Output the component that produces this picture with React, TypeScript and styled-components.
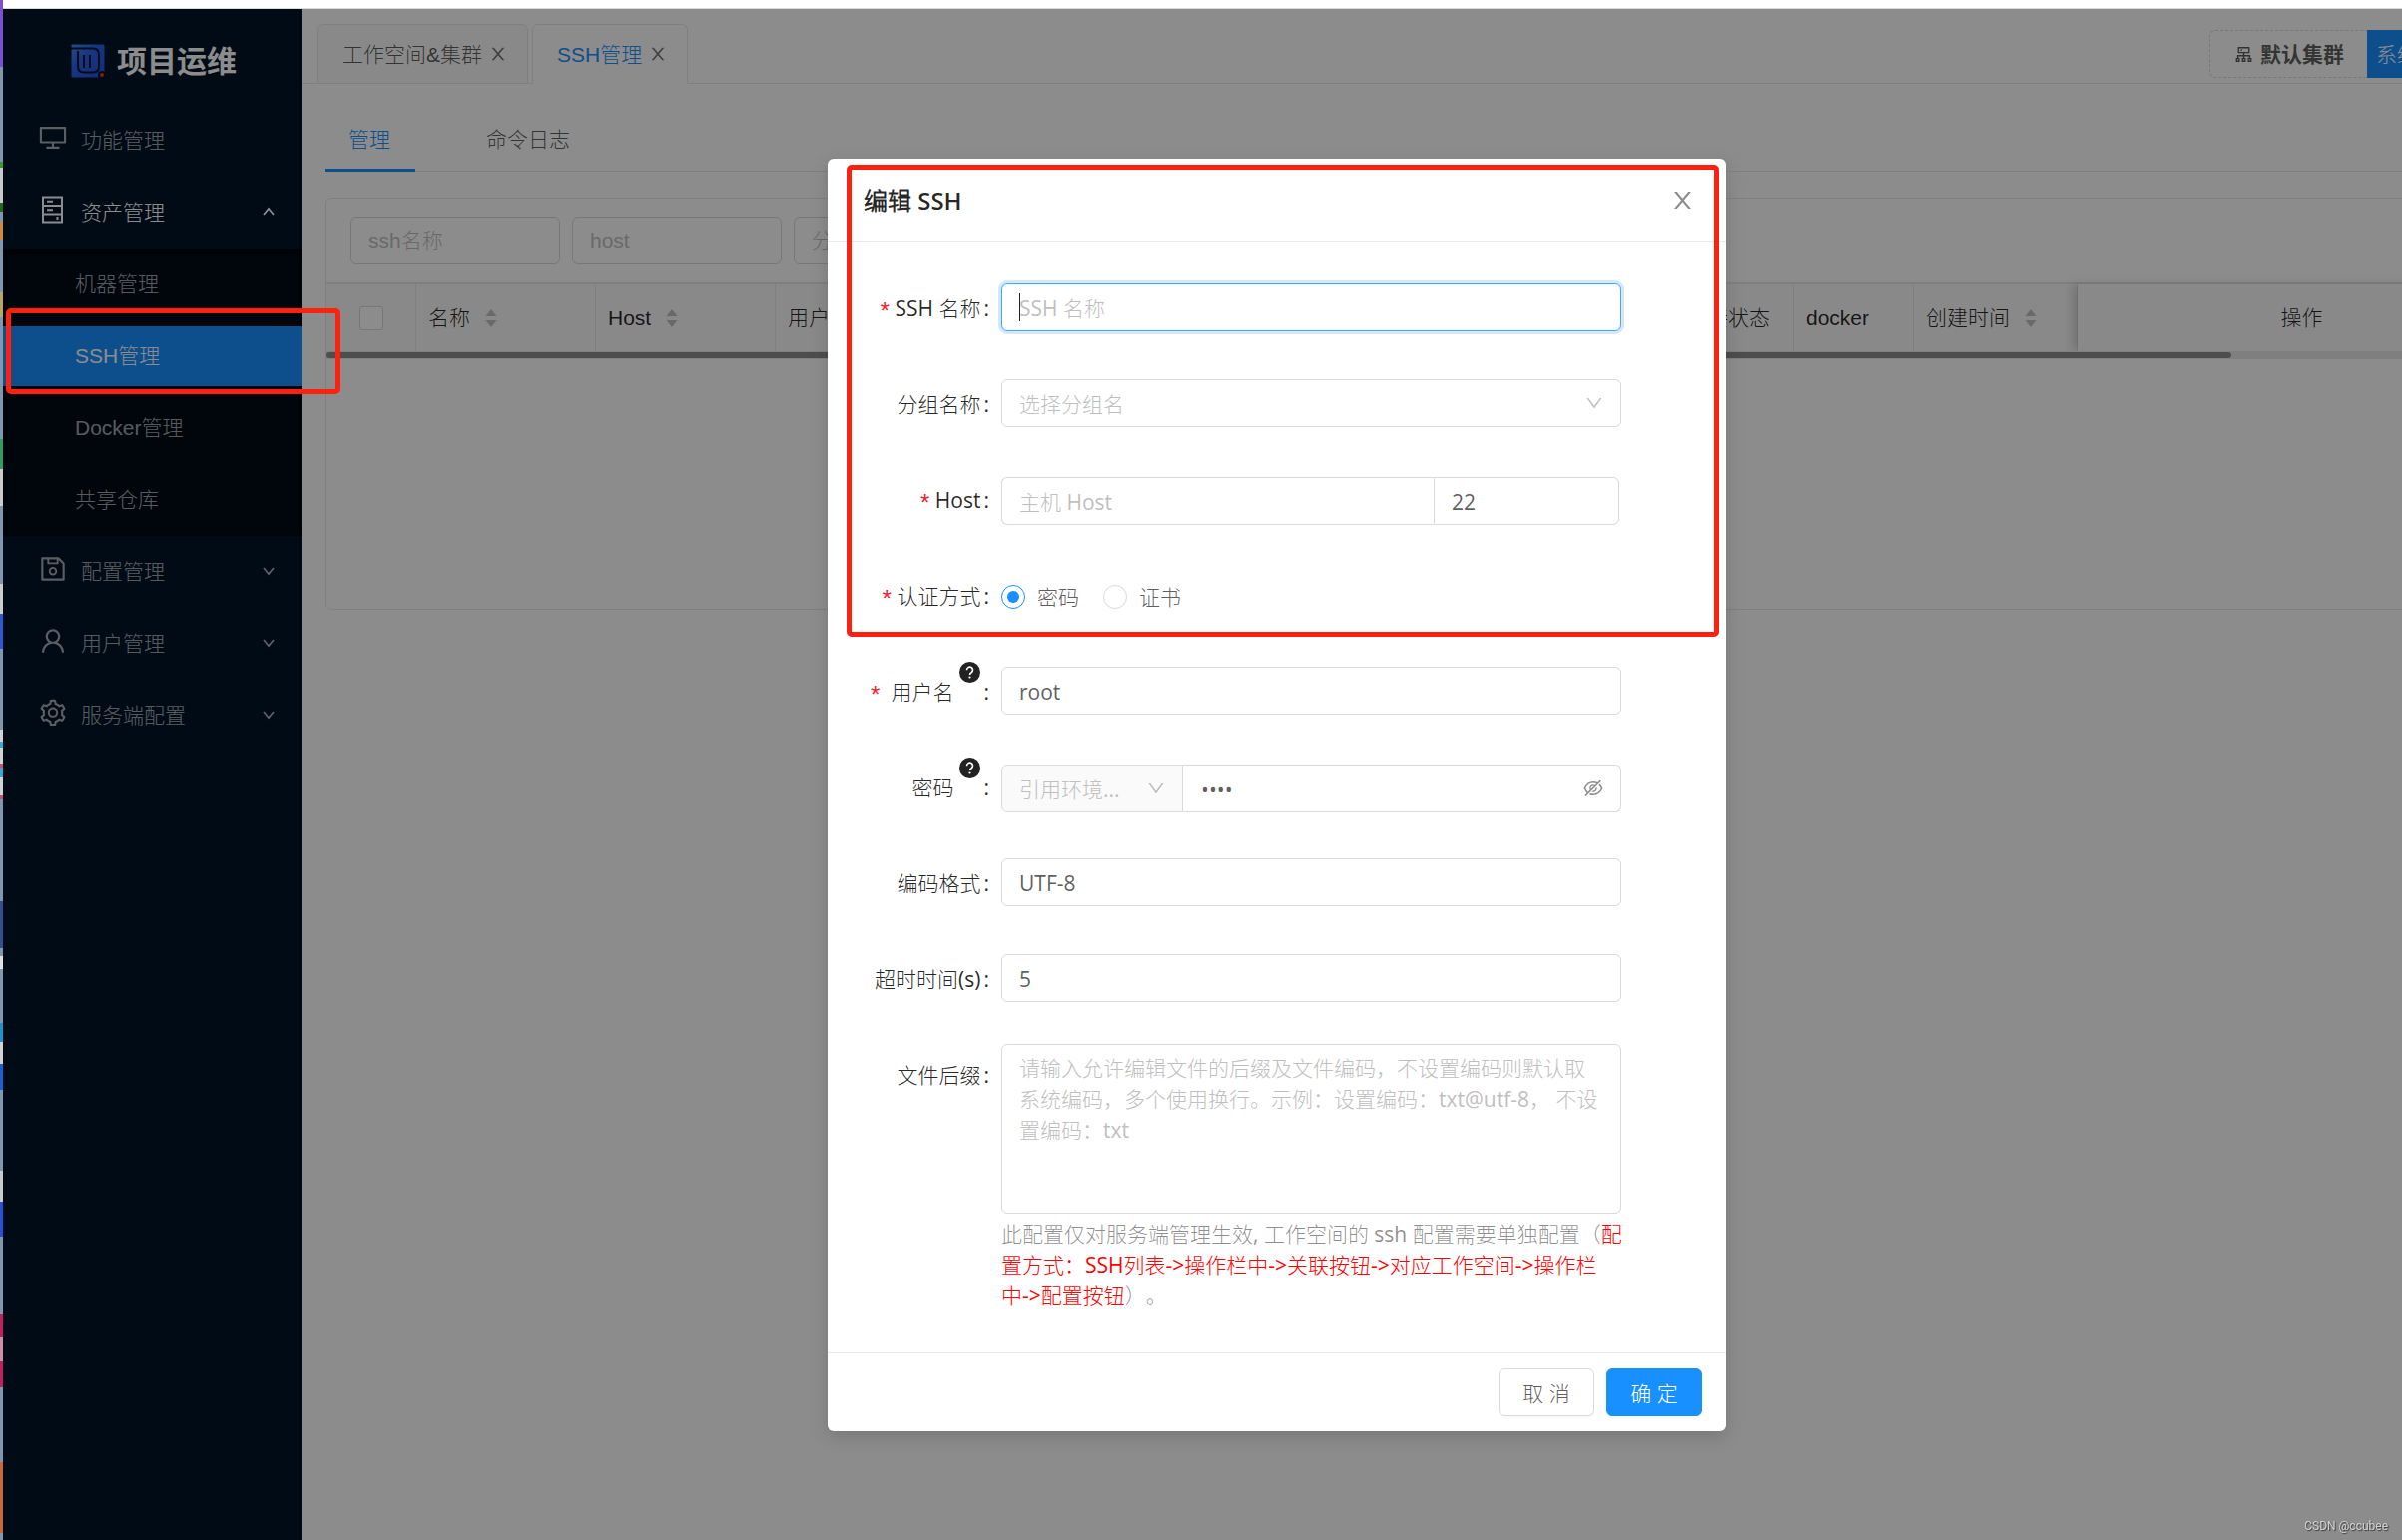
import React from 'react';
import styled, { createGlobalStyle } from 'styled-components';
import {
  AiOutlineCluster,
  AiOutlineDesktop,
  AiOutlineDown,
  AiOutlineEyeInvisible,
  AiOutlineSave,
  AiOutlineSetting,
  AiOutlineUser,
} from 'react-icons/ai';

const consoleFont = `"Liberation Sans", "Noto Sans CJK SC", sans-serif`;
const dialogFont = `"Open Sans", "Noto Sans CJK SC Light", "Noto Sans CJK SC", sans-serif`;

const GlobalStyle = createGlobalStyle`
  *, *::before, *::after { box-sizing: border-box; }
  body {
    margin: 0;
    font-family: ${consoleFont};
    font-size: 21px;
    line-height: 31px;
    font-weight: 300;
    text-spacing-trim: space-all;
    color: rgba(0, 0, 0, 0.65);
    background: #fff;
  }
  button, input, select, textarea {
    font: inherit;
    color: inherit;
    margin: 0;
  }
  button { cursor: pointer; }
`;

/* ---------- Page frame ---------- */

const Page = styled.div`
  display: flex;
  min-height: 100vh;
  overflow: hidden;
`;

const DesktopEdge = styled.div`
  flex: 0 0 3px;
  background: linear-gradient(
    #7a50d2 0 67px, #7f98b0 67px 162px, #3c9a2a 162px 168px, #c9c9c9 168px 203px,
    #1f6a1c 203px 212px, #7f98b0 212px 222px, #d08a3a 222px 240px, #7f98b0 240px 293px,
    #b9a660 293px 318px, #7f98b0 318px 440px, #2f9d60 440px 470px, #cbcbcb 470px 507px,
    #7f98b0 507px 585px, #cdcdcd 585px 615px, #2c58d2 615px 650px, #7f98b0 650px 731px,
    #d2d2d2 731px 743px, #3aa9d0 743px 749px, #d2d2d2 749px 765px, #c8506a 765px 769px,
    #3aa9d0 769px 779px, #d2d2d2 779px 797px, #c8506a 797px 801px, #7f98b0 801px 903px,
    #33508c 903px 950px, #7f98b0 950px 958px, #e0e0e0 958px 971px, #7f98b0 971px 1025px,
    #1f92cc 1025px 1044px, #d2d2d2 1044px 1066px, #1b5fd0 1066px 1092px, #7f98b0 1092px 1173px,
    #cbcbcb 1173px 1204px, #2a4fd0 1204px 1239px, #7f98b0 1239px 1317px, #c0205f 1317px 1340px,
    #cf8fa8 1340px 1364px, #c0205f 1364px 1390px, #7f98b0 1390px 1465px, #c8683a 1465px 1536px,
    #7f98b0 1536px
  );
`;

const Viewport = styled.div`
  flex: 1;
  min-width: 0;
  display: flex;
  flex-direction: column;
`;

const BrowserEdge = styled.div`
  height: 9px;
  border-bottom: 1px solid #d9d9d9;
  background: #fff;
`;

/* The console is wider than the visible window and runs off its right side. */
const Console = styled.div`
  position: relative;
  flex: 1;
  display: flex;
  margin-right: -149px;
`;

/* ---------- Sider ---------- */

const Sider = styled.aside`
  flex: 0 0 300px;
  background: #001529;
`;

const Brand = styled.div`
  display: flex;
  align-items: center;
  justify-content: center;
  gap: 12px;
  height: 96px;
  padding: 8px 22px 0 24px;
  font-size: 30px;
  font-weight: 700;
  color: #fff;
`;

const Menu = styled.nav`
  display: flex;
  flex-direction: column;
`;

const MenuTitle = styled.a<{ $open?: boolean }>`
  display: flex;
  align-items: center;
  gap: 13px;
  height: 60px;
  margin: 6px 0;
  padding: 0 28px 2px 35px;
  color: ${(p) => (p.$open ? '#fff' : 'rgba(255, 255, 255, 0.65)')};
  text-decoration: none;

  > span { flex: 1; }
  > svg:first-child { margin-bottom: 4px; }
`;

const SubMenu = styled.div`
  padding: 6px 0;
  display: grid;
  gap: 12px;
  background: #000c17;
  box-shadow: inset 0 3px 12px rgba(0, 0, 0, 0.45);
`;

const MenuItem = styled.a<{ $selected?: boolean }>`
  height: 60px;
  line-height: 60px;
  padding-left: 72px;
  color: ${(p) => (p.$selected ? '#fff' : 'rgba(255, 255, 255, 0.65)')};
  background: ${(p) => (p.$selected ? '#1890ff' : 'transparent')};
  text-decoration: none;
`;

/* ---------- Main area ---------- */

const Main = styled.main`
  flex: 1;
  min-width: 0;
  background: #fff;
`;

const TopBar = styled.header`
  display: flex;
  justify-content: space-between;
  padding: 15px 24px 0 15px;
  height: 75px;
  box-shadow: inset 0 -1px #e8e8e8;
`;

const PageTabs = styled.div`
  display: flex;
  gap: 4px;
`;

const PageTab = styled.div<{ $active?: boolean }>`
  display: flex;
  align-items: center;
  gap: 6px;
  height: 60px;
  padding: 0 19px 0 24px;
  border: 1px solid #e8e8e8;
  border-bottom-color: ${(p) => (p.$active ? '#fff' : '#e8e8e8')};
  border-radius: 6px 6px 0 0;
  background: ${(p) => (p.$active ? '#fff' : '#fafafa')};
  color: ${(p) => (p.$active ? '#1890ff' : 'rgba(0, 0, 0, 0.65)')};
`;

const PlainButton = styled.button`
  display: inline-flex;
  align-items: center;
  padding: 0;
  border: 0;
  background: none;
`;

const CloseMark = styled(PlainButton)`
  color: rgba(0, 0, 0, 0.55);
`;

const ClusterActions = styled.div`
  display: flex;
  height: 48px;
  margin-top: 6px;
`;

const ClusterButton = styled.button`
  display: flex;
  align-items: center;
  justify-content: center;
  gap: 6px;
  width: 158px;
  padding: 0;
  border: 1px dashed #d9d9d9;
  border-right: 0;
  border-radius: 6px 0 0 6px;
  background: #fff;
  font-weight: 700;
`;

const SystemButton = styled.button`
  width: 160px;
  padding: 0 9px;
  border: 0;
  border-radius: 0 6px 6px 0;
  background: #1890ff;
  color: #fff;
  text-align: left;
`;

const Content = styled.section`
  padding: 26px 23px;
`;

const ViewTabs = styled.div`
  display: flex;
  gap: 48px;
  height: 62px;
  margin-bottom: 26px;
  box-shadow: inset 0 -1px #e8e8e8;
`;

const ViewTab = styled.button<{ $active?: boolean }>`
  padding: 0 25px 0 23px;
  border: 0;
  border-bottom: 3px solid ${(p) => (p.$active ? '#1890ff' : 'transparent')};
  background: none;
  color: ${(p) => (p.$active ? '#1890ff' : 'rgba(0, 0, 0, 0.65)')};
`;

const Card = styled.div`
  border: 1px solid #e8e8e8;
  border-radius: 6px;
  min-height: 413px;
  overflow: hidden;
`;

const Filters = styled.form`
  display: flex;
  gap: 12px;
  padding: 18px 24px;
`;

const Field = styled.input`
  display: block;
  width: 100%;
  height: 48px;
  padding: 0 17px;
  border: 1px solid #d9d9d9;
  border-radius: 6px;
  background: #fff;
  outline: 0;

  &::placeholder { color: #bfbfbf; opacity: 1; }
`;

const FilterField = styled(Field)`
  width: 210px;
`;

const HostTable = styled.table`
  width: 100%;
  table-layout: fixed;
  border-collapse: separate;
  border-spacing: 0;
  border-top: 2px solid #e8e8e8;
`;

const HeadCell = styled.th<{ $width?: number; $align?: string; $pinned?: boolean }>`
  width: ${(p) => (p.$width ? `${p.$width}px` : 'auto')};
  height: 67px;
  padding: 0 12px;
  border-right: 1px solid #e8e8e8;
  background: #fafafa;
  color: rgba(0, 0, 0, 0.85);
  font-weight: 300;
  text-align: ${(p) => p.$align || 'left'};
  white-space: nowrap;
  box-shadow: ${(p) => (p.$pinned ? '-6px 0 9px rgba(0, 0, 0, 0.15)' : 'none')};
`;

const SortLabel = styled.span`
  display: inline-flex;
  align-items: center;
  gap: 15px;
`;

const Tick = styled.input`
  display: block;
  appearance: none;
  width: 24px;
  height: 24px;
  margin: 0 auto;
  border: 1px solid #d9d9d9;
  border-radius: 3px;
  background: #fff;
`;

const ScrollTrack = styled.div`
  height: 8px;
  padding-top: 1px;
  background: #e8e8e8;
`;

const ScrollThumb = styled.div`
  width: calc(100% - 296px);
  height: 6px;
  border-radius: 3px;
  background: #8c8c8c;
`;

/* ---------- Dialog ---------- */

const Mask = styled.div`
  position: absolute;
  inset: 0;
  display: flex;
  justify-content: center;
  align-items: flex-start;
  padding-top: 150px;
  background: rgba(0, 0, 0, 0.45);
`;

const Dialog = styled.div`
  position: relative;
  width: 900px;
  border-radius: 6px;
  background: #fff;
  box-shadow: 0 6px 18px rgba(0, 0, 0, 0.15);
  font-family: ${dialogFont};
  font-weight: 400;
`;

const DialogHeader = styled.header`
  display: flex;
  align-items: center;
  justify-content: space-between;
  height: 83px;
  padding: 0 30px 0 36px;
  border-bottom: 1px solid #e8e8e8;

  svg { color: rgba(0, 0, 0, 0.45); }
`;

const DialogTitle = styled.h2`
  margin: 0;
  font-size: 24px;
  font-weight: 600;
  color: rgba(0, 0, 0, 0.85);
`;

const DialogBody = styled.form`
  display: grid;
  grid-template-columns: minmax(0, 1fr);
  gap: 36px;
  padding: 36px;
`;

const FormRow = styled.div<{ $top?: boolean }>`
  display: grid;
  grid-template-columns: minmax(0, 1fr) 621px 69px;
  align-items: ${(p) => (p.$top ? 'start' : 'center')};
  min-height: 60px;

  input:not([type='radio']), select { padding-top: 2px; }
`;

const RowLabel = styled.label`
  display: flex;
  justify-content: flex-end;
  height: 60px;
  padding: 1px 12px 0 0;
  line-height: 60px;
  white-space: nowrap;
  color: rgba(0, 0, 0, 0.85);

  &::after { content: ':'; margin-left: 3px; }
`;

const Required = styled.span`
  padding: 6px 3px 0 0;
  color: #f5222d;
  font-family: "Liberation Mono", monospace;
  font-size: 24px;
`;

const Hint = styled.span`
  padding-left: 6px;
  line-height: 0;
`;

const FocusField = styled(Field)`
  border-color: #40a9ff;
  box-shadow: 0 0 0 3px rgba(24, 144, 255, 0.2);
  caret-color: transparent;
`;

const Overlay = styled.div`
  position: relative;
`;

const Caret = styled.span`
  position: absolute;
  left: 18px;
  top: 10px;
  width: 1px;
  height: 28px;
  background: #222;
`;

const Picker = styled.select`
  display: block;
  appearance: none;
  width: 100%;
  height: 48px;
  padding: 0 17px;
  border: 1px solid #d9d9d9;
  border-radius: 6px;
  background: #fff;
  color: #bfbfbf;
  opacity: 1;
  outline: 0;

  &:disabled {
    border-radius: 6px 0 0 6px;
    background: #fafafa;
    color: #bfbfbf;
    opacity: 1;
  }
`;

const TrailingIcon = styled.span`
  position: absolute;
  right: 17px;
  top: 14px;
  line-height: 0;
  color: rgba(0, 0, 0, 0.25);
  pointer-events: none;
`;

const RevealButton = styled(PlainButton)`
  position: absolute;
  right: 17px;
  top: 13px;
  color: rgba(0, 0, 0, 0.45);
`;

const InputGroup = styled.div`
  display: grid;
  margin-top: 4px;
`;

const HostGroup = styled(InputGroup)`
  grid-template-columns: 433px 186px;

  > :first-child { border-radius: 6px 0 0 6px; border-right: 0; }
  > :last-child { border-radius: 0 6px 6px 0; }
`;

const PasswordGroup = styled(InputGroup)`
  grid-template-columns: 182px 1fr;

  ${Field} { border-left: 0; border-radius: 0 6px 6px 0; padding-left: 18px; }
`;

const RadioGroup = styled.div`
  display: flex;
  gap: 24px;
  margin-top: 4px;
`;

const RadioLabel = styled.label`
  display: flex;
  align-items: center;
  gap: 12px;
`;

const Radio = styled.input`
  appearance: none;
  width: 24px;
  height: 24px;
  border: 1px solid #d9d9d9;
  border-radius: 50%;
  background: #fff;

  &:checked {
    padding: 5px;
    border-color: #1890ff;
    background: #1890ff content-box;
  }
`;

const SuffixArea = styled.textarea`
  display: block;
  width: 100%;
  height: 170px;
  padding: 8px 17px;
  border: 1px solid #d9d9d9;
  border-radius: 6px;
  outline: 0;
  resize: none;

  &::placeholder { color: #bfbfbf; opacity: 1; }
`;

const HelpText = styled.p`
  margin: 5px 0;
  color: rgba(0, 0, 0, 0.45);
  white-space: nowrap;

  em {
    font-style: normal;
    color: #f00;
  }
`;

const DialogFooter = styled.footer`
  display: flex;
  justify-content: flex-end;
  gap: 12px;
  padding: 15px 24px;
  border-top: 1px solid #e8e8e8;
`;

const ActionButton = styled.button<{ $primary?: boolean }>`
  width: 96px;
  height: 48px;
  padding: 2px 0 0;
  border: 1px solid ${(p) => (p.$primary ? '#1890ff' : '#d9d9d9')};
  border-radius: 6px;
  background: ${(p) => (p.$primary ? '#1890ff' : '#fff')};
  color: ${(p) => (p.$primary ? '#fff' : 'rgba(0, 0, 0, 0.65)')};
  box-shadow: 0 3px 0 rgba(0, 0, 0, 0.02);
`;

/* ---------- Annotations ---------- */

const Marker = styled.div`
  position: absolute;
  border: 5px solid #ff2010;
  border-radius: 5px;
  pointer-events: none;
`;

const MenuMarker = styled(Marker)`
  left: 3px;
  top: 300px;
  width: 335px;
  height: 86px;
`;

const FormMarker = styled(Marker)`
  left: 19px;
  right: 7px;
  top: 6px;
  height: 473px;
`;

const Watermark = styled.span`
  position: fixed;
  right: 14px;
  bottom: 5px;
  font-family: Roboto, sans-serif;
  font-size: 12px;
  line-height: 18px;
  font-weight: 400;
  color: #d2d2d2;
  text-shadow: 1px 1px 1px rgba(0, 0, 0, 0.6);
`;

/* ---------- Drawings ---------- */

const CloseIcon = ({ size }: { size: number }) => (
  <svg width={size} height={size} viewBox="0 0 1024 1024" fill="currentColor" aria-hidden="true">
    <path d="M563.8 512l262.5-312.9c4.4-5.2.7-13.1-6.1-13.1h-79.8c-4.7 0-9.2 2.1-12.3 5.7L511.6 449.8 295.1 191.700c-3-3.600-7.500-5.700-12.300-5.700H203c-6.800 0-10.500 7.900-6.100 13.100L459.400 512 196.900 824.900A7.950 7.950 0 0 0 203 838h79.800c4.700 0 9.200-2.100 12.300-5.700l216.500-258.100 216.500 258.100c3 3.600 7.500 5.700 12.300 5.700h79.800c6.800 0 10.500-7.900 6.100-13.100L563.800 512z" />
  </svg>
);

const BrandLogo = () => (
  <svg width="34" height="34" viewBox="0 0 34 34" aria-hidden="true">
    <defs>
      <linearGradient id="brand" x1="0" y1="0" x2="1" y2="1">
        <stop offset="0" stopColor="#4a86f5" />
        <stop offset="0.4" stopColor="#2a62ea" />
        <stop offset="1" stopColor="#2550dc" />
      </linearGradient>
    </defs>
    <rect x="0.5" y="0.5" width="33" height="33" rx="1" fill="url(#brand)" />
    <g fill="none" stroke="#001529" strokeWidth="2">
      <path d="M0 4.500H22q6 0 6 6v12q0 6-6 6h-9q-6 0-6-6V7" />
      <path d="M13 11v13M19 11v13" />
    </g>
    <circle cx="31" cy="31" r="4" fill="#001529" />
    <circle cx="31" cy="31" r="2" fill="#d8440c" />
  </svg>
);

const RackIcon = () => (
  <svg width="30" height="30" viewBox="0 0 30 30" fill="none" stroke="currentColor" strokeWidth="2" aria-hidden="true">
    <path d="M5 2.500h19v25h-19zM5 11h19M5 19.500h19M9 6.800h6M9 15.200h6M19.500 22v3" />
  </svg>
);

const FoldArrow = ({ up = false }: { up?: boolean }) => (
  <svg width="12" height="10" viewBox="0 0 12 10" fill="none" stroke="currentColor" strokeWidth="1.800" aria-hidden="true">
    <path d={up ? 'M1 8l5-6 5 6' : 'M1 2l5 6 5-6'} />
  </svg>
);

const SortArrows = () => (
  <svg width="12" height="20" viewBox="0 0 12 20" fill="#bfbfbf" aria-hidden="true">
    <path d="M6 1l5.500 7h-11zM6 19l5.500-7h-11z" />
  </svg>
);

const HintIcon = () => (
  <svg width="21" height="21" viewBox="0 0 21 21" aria-hidden="true">
    <circle cx="10.500" cy="10.500" r="10.500" fill="#222" />
    <path d="M7.500 8.200a3 3 0 1 1 4.600 2.500c-1 .6-1.600 1.100-1.600 2.300" fill="none" stroke="#fff" strokeWidth="1.600" />
    <circle cx="10.500" cy="15.500" r="1.100" fill="#fff" />
  </svg>
);

/* ---------- Data ---------- */

const lowerMenus = [
  { title: '配置管理', Icon: AiOutlineSave },
  { title: '用户管理', Icon: AiOutlineUser },
  { title: '服务端配置', Icon: AiOutlineSetting },
];

const assetItems = ['机器管理', 'SSH管理', 'Docker管理', '共享仓库'];
const filters = ['ssh名称', 'host', '分组'];

const Sortable = ({ text }: { text: string }) => (
  <SortLabel>
    {text}
    <SortArrows />
  </SortLabel>
);

function SideNavigation() {
  return (
    <Sider>
      <Brand>
        <BrandLogo />
        项目运维
      </Brand>
      <Menu>
        <MenuTitle href="#feature">
          <AiOutlineDesktop size={30} />
          <span>功能管理</span>
        </MenuTitle>
        <MenuTitle href="#assets" $open>
          <RackIcon />
          <span>资产管理</span>
          <FoldArrow up />
        </MenuTitle>
        <SubMenu>
          {assetItems.map((item) => (
            <MenuItem key={item} href="#item" $selected={item === 'SSH管理'}>
              {item}
            </MenuItem>
          ))}
        </SubMenu>
        {lowerMenus.map(({ title, Icon }) => (
          <MenuTitle key={title} href="#menu">
            <Icon size={30} />
            <span>{title}</span>
            <FoldArrow />
          </MenuTitle>
        ))}
      </Menu>
    </Sider>
  );
}

function Workspace() {
  return (
    <Main>
      <TopBar>
        <PageTabs>
          <PageTab>
            工作空间&amp;集群
            <CloseMark aria-label="关闭">
              <CloseIcon size={20} />
            </CloseMark>
          </PageTab>
          <PageTab $active>
            SSH管理
            <CloseMark aria-label="关闭">
              <CloseIcon size={20} />
            </CloseMark>
          </PageTab>
        </PageTabs>
        <ClusterActions>
          <ClusterButton>
            <AiOutlineCluster size={21} />
            默认集群
          </ClusterButton>
          <SystemButton>系统管理</SystemButton>
        </ClusterActions>
      </TopBar>
      <Content>
        <ViewTabs>
          <ViewTab $active>管理</ViewTab>
          <ViewTab>命令日志</ViewTab>
        </ViewTabs>
        <Card>
          <Filters>
            {filters.map((name) => (
              <FilterField key={name} aria-label={name} placeholder={name} />
            ))}
          </Filters>
          <HostTable>
            <thead>
              <tr>
                <HeadCell $width={90}>
                  <Tick type="checkbox" aria-label="全选" />
                </HeadCell>
                <HeadCell $width={180}><Sortable text="名称" /></HeadCell>
                <HeadCell $width={180}><Sortable text="Host" /></HeadCell>
                <HeadCell>用户名</HeadCell>
                <HeadCell $width={120}>连接状态</HeadCell>
                <HeadCell $width={120}>docker</HeadCell>
                <HeadCell $width={164}><Sortable text="创建时间" /></HeadCell>
                <HeadCell $width={450} $align="center" $pinned>操作</HeadCell>
              </tr>
            </thead>
          </HostTable>
          <ScrollTrack>
            <ScrollThumb />
          </ScrollTrack>
        </Card>
      </Content>
    </Main>
  );
}

function EditDialog() {
  return (
    <Dialog role="dialog" aria-labelledby="dialog-title">
      <DialogHeader>
        <DialogTitle id="dialog-title">编辑 SSH</DialogTitle>
        <PlainButton aria-label="关闭">
          <CloseIcon size={27} />
        </PlainButton>
      </DialogHeader>
      <DialogBody>
        <FormRow>
          <RowLabel htmlFor="name"><Required>*</Required>SSH 名称</RowLabel>
          <Overlay>
            <FocusField id="name" placeholder="SSH 名称" />
            <Caret />
          </Overlay>
        </FormRow>
        <FormRow>
          <RowLabel htmlFor="group">分组名称</RowLabel>
          <Overlay>
            <Picker id="group">
              <option>选择分组名</option>
            </Picker>
            <TrailingIcon><AiOutlineDown size={20} /></TrailingIcon>
          </Overlay>
        </FormRow>
        <FormRow>
          <RowLabel htmlFor="host"><Required>*</Required>Host</RowLabel>
          <HostGroup>
            <Field id="host" placeholder="主机 Host" />
            <Field aria-label="端口" defaultValue="22" />
          </HostGroup>
        </FormRow>
        <FormRow>
          <RowLabel as="span" id="auth"><Required>*</Required>认证方式</RowLabel>
          <RadioGroup role="radiogroup" aria-labelledby="auth">
            <RadioLabel><Radio type="radio" name="auth" defaultChecked />密码</RadioLabel>
            <RadioLabel><Radio type="radio" name="auth" />证书</RadioLabel>
          </RadioGroup>
        </FormRow>
        <FormRow>
          <RowLabel htmlFor="user">
            <Required>*</Required>&nbsp;用户名<Hint><HintIcon /></Hint>
          </RowLabel>
          <Field id="user" defaultValue="root" />
        </FormRow>
        <FormRow>
          <RowLabel htmlFor="password">密码<Hint><HintIcon /></Hint></RowLabel>
          <PasswordGroup>
            <Overlay>
              <Picker disabled aria-label="引用环境变量">
                <option>引用环境...</option>
              </Picker>
              <TrailingIcon><AiOutlineDown size={20} /></TrailingIcon>
            </Overlay>
            <Overlay>
              <Field id="password" type="password" defaultValue="root" />
              <RevealButton type="button" aria-label="显示密码">
                <AiOutlineEyeInvisible size={22} />
              </RevealButton>
            </Overlay>
          </PasswordGroup>
        </FormRow>
        <FormRow>
          <RowLabel htmlFor="charset">编码格式</RowLabel>
          <Field id="charset" defaultValue="UTF-8" />
        </FormRow>
        <FormRow>
          <RowLabel htmlFor="timeout">超时时间(s)</RowLabel>
          <Field id="timeout" defaultValue="5" />
        </FormRow>
        <FormRow $top>
          <RowLabel htmlFor="suffix">文件后缀</RowLabel>
          <div>
            <SuffixArea
              id="suffix"
              placeholder="请输入允许编辑文件的后缀及文件编码，不设置编码则默认取系统编码，多个使用换行。示例：设置编码：txt@utf-8， 不设置编码：txt"
            />
            <HelpText>
              此配置仅对服务端管理生效, 工作空间的 ssh 配置需要单独配置（<em>配<br />
              置方式：SSH列表-&gt;操作栏中-&gt;关联按钮-&gt;对应工作空间-&gt;操作栏<br />
              中-&gt;配置按钮</em>）。
            </HelpText>
          </div>
        </FormRow>
      </DialogBody>
      <DialogFooter>
        <ActionButton>取 消</ActionButton>
        <ActionButton $primary>确 定</ActionButton>
      </DialogFooter>
      <FormMarker />
    </Dialog>
  );
}

export default function App() {
  return (
    <>
      <GlobalStyle />
      <Page>
        <DesktopEdge />
        <Viewport>
          <BrowserEdge />
          <Console>
            <SideNavigation />
            <Workspace />
            <Mask>
              <EditDialog />
            </Mask>
            <MenuMarker />
          </Console>
        </Viewport>
      </Page>
      <Watermark>CSDN @ccubee</Watermark>
    </>
  );
}
